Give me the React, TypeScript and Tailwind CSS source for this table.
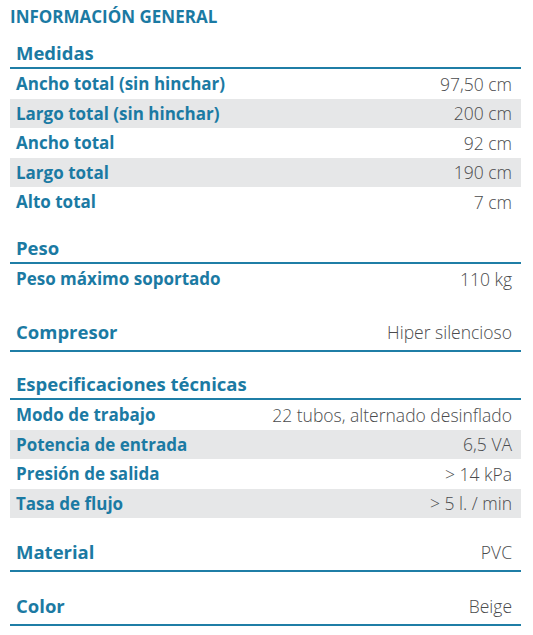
import React from 'react';

type Row = { label: string; value: string };

const Section: React.FC<{ title: string; value?: string; rows?: Row[]; className?: string }> = ({
  title,
  value,
  rows = [],
  className = '',
}) => (
  <div className={className}>
    <div
      className={`flex items-end justify-between border-b-2 border-[#1f7ea6] px-[6px] leading-[22px] ${
        value ? 'h-[34px] pb-[7px]' : 'h-[32px] pb-[3px]'
      }`}
    >
      <span className="text-[18.5px] font-bold text-[#1b7aa3]">{title}</span>
      {value && <span className="pr-[3px] text-[17.5px] font-light text-[#4a4b4d]">{value}</span>}
    </div>
    {rows.map((r, i) => (
      <div
        key={r.label}
        className={`flex h-[29.5px] items-center justify-between pl-[6px] pr-[9px] ${i % 2 === 1 ? 'bg-[#e6e7e8]' : ''}`}
      >
        <span className="text-[17px] font-bold text-[#1b7aa3]">{r.label}</span>
        <span className="text-[17.5px] font-light text-[#4a4b4d]">{r.value}</span>
      </div>
    ))}
  </div>
);

export default function App() {
  return (
    <div className="min-h-screen bg-white px-[10px] pt-[7px]" style={{ fontFamily: '"Open Sans", sans-serif' }}>
      <h1 className="text-[17px] font-bold leading-[20px] text-[#1b7aa3]">INFORMACIÓN GENERAL</h1>
      <div className="w-[511px]">
        <Section
          className="mt-[10px]"
          title="Medidas"
          rows={[
            { label: 'Ancho total (sin hinchar)', value: '97,50 cm' },
            { label: 'Largo total (sin hinchar)', value: '200 cm' },
            { label: 'Ancho total', value: '92 cm' },
            { label: 'Largo total', value: '190 cm' },
            { label: 'Alto total', value: '7 cm' },
          ]}
        />
        <Section className="mt-[15.5px]" title="Peso" rows={[{ label: 'Peso máximo soportado', value: '110 kg' }]} />
        <Section className="mt-[24.5px]" title="Compresor" value="Hiper silencioso" />
        <Section
          className="mt-[16px]"
          title="Especificaciones técnicas"
          rows={[
            { label: 'Modo de trabajo', value: '22 tubos, alternado desinflado' },
            { label: 'Potencia de entrada', value: '6,5 VA' },
            { label: 'Presión de salida', value: '> 14 kPa' },
            { label: 'Tasa de flujo', value: '> 5 l. / min' },
          ]}
        />
        <Section className="mt-[20px]" title="Material" value="PVC" />
        <Section className="mt-[20px]" title="Color" value="Beige" />
      </div>
    </div>
  );
}
